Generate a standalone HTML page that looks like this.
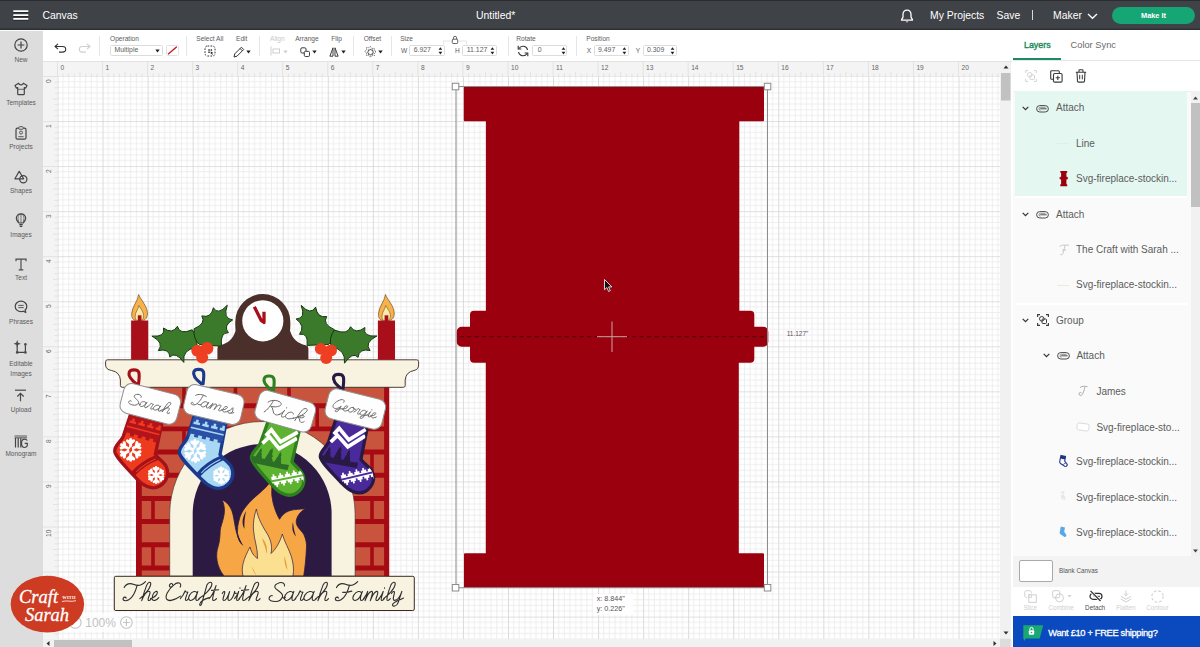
<!DOCTYPE html>
<html>
<head>
<meta charset="utf-8">
<style>
*{box-sizing:border-box;margin:0;padding:0}
html,body{width:1200px;height:647px;overflow:hidden;background:#fff;font-family:"Liberation Sans",sans-serif;}
.a{position:absolute;white-space:nowrap}
#hdr{position:absolute;left:0;top:0;width:1200px;height:30px;background:#3f4247;border-top:1px solid #2a2c30;z-index:5;box-shadow:inset 0 -1.5px 0 #2d2f33}
#hdr .t{position:absolute;color:#fff;font-size:10.4px;line-height:12px;top:8.5px;white-space:nowrap}
#side{position:absolute;left:0;top:29px;width:42.5px;height:618px;background:#dddddd}
#side .lb{position:absolute;left:0;width:42px;text-align:center;font-size:6.5px;line-height:8.6px;color:#5a5a5a}
#side svg{position:absolute;overflow:visible}
#tb{position:absolute;left:43px;top:29px;width:969px;height:33px;background:#fff;border-bottom:1px solid #e3e3e3}
#tb .l{position:absolute;font-size:6.6px;line-height:8px;color:#5c5c5c;white-space:nowrap;top:5.5px}
#tb .sep{position:absolute;top:7px;width:1px;height:20px;background:#e6e6e6}
#tb .box{position:absolute;height:10.5px;top:16.3px;border:1px solid #dcdcdc;border-radius:1.5px;font-size:6.9px;color:#5c5c5c;line-height:8.5px;padding-left:3.5px;background:#fff;white-space:nowrap}
#tb .sp{position:absolute;top:17.5px;width:4px;height:8px}
#tb svg{position:absolute;overflow:visible}
#rt{position:absolute;left:43px;top:62px;width:957px;height:15px;background:#f4f4f4}
#rl{position:absolute;left:43px;top:62px;width:15px;height:577px;background:#f4f4f4}
.rn{position:absolute;font-size:6.6px;line-height:8px;color:#666;top:1.5px}
.rv{position:absolute;font-size:6.6px;line-height:8px;color:#666;left:3px;transform-origin:0 0;transform:rotate(-90deg)}
#cv{position:absolute;left:0;top:0;width:1200px;height:647px;overflow:hidden;pointer-events:none}
#vs{position:absolute;left:1000px;top:62px;width:10.5px;height:577px;background:#f1f1f1}
#hs{position:absolute;left:43px;top:639px;width:969px;height:8px;background:#f1f1f1}
#rp{position:absolute;left:1012px;top:29px;width:188px;height:618px;background:#fafafa;border-left:1px solid #fff}
#rp .row{position:absolute;left:0;margin-top:.8px;font-size:10px;line-height:12px;color:#5c5c5c;white-space:nowrap}
#rp svg{position:absolute;overflow:visible}
</style>
</head>
<body>
<div id="hdr">
 <svg class="a" style="left:13px;top:9px" width="16" height="12" viewBox="0 0 16 12"><path d="M.3 2.300h15M.3 6.300h15M.3 10h15" stroke="#1e2023" stroke-width="1" fill="none"/><path d="M.3 1.150h15M.3 5.150h15M.3 8.850h15" stroke="#fff" stroke-width="1.700" fill="none"/></svg>
 <div class="t" style="left:42.5px">Canvas</div>
 <div class="t" style="left:476px">Untitled*</div>
 <svg class="a" style="left:900px;top:8px" width="14" height="15" viewBox="0 0 14 15"><path d="M7 1.2c-2.6 0-4 1.9-4 4.3v2.6L1.6 10.6v.6h10.8v-.6L11 8.100V5.500c0-2.400-1.400-4.300-4-4.300z" fill="none" stroke="#fff" stroke-width="1.3" stroke-linejoin="round"/><path d="M5.600 12.400a1.500 1.500 0 0 0 2.800 0z" fill="#fff"/></svg>
 <div class="t" style="left:930px">My Projects</div>
 <div class="t" style="left:996.5px">Save</div>
 <div class="a" style="left:1032px;top:9px;width:1px;height:10px;background:#d8d8d8"></div>
 <div class="t" style="left:1053px">Maker</div>
 <svg class="a" style="left:1087px;top:12px" width="11" height="7" viewBox="0 0 11 7"><path d="M1 1l4.500 4.300L10 1" stroke="#fff" stroke-width="1.300" fill="none"/></svg>
 <div class="a" style="left:1112px;top:5.700px;width:83px;height:17px;border-radius:9px;background:#16a574;color:#fff;font-size:7.400px;font-weight:bold;text-align:center;line-height:17px">Make It</div>
</div>
<div id="side">
 <div class="a hl-line" style="left:0;top:0;width:43px;height:2.300px;background:#fbfbfb"></div>
 <!-- coordinates inside #side are page y - 29 -->
 <svg style="left:13.500px;top:9.300px" width="14" height="14" viewBox="0 0 14 14"><circle cx="7" cy="7" r="6.200" fill="none" stroke="#444" stroke-width="1.200"/><path d="M7 3.600v6.800M3.600 7h6.800" stroke="#444" stroke-width="1.200" fill="none"/></svg>
 <div class="lb" style="top:26.700px">New</div>
 <svg style="left:13.500px;top:53px" width="14" height="14" viewBox="0 0 14 14"><path d="M4.600 1.200L1 3.400l1.300 2.700 1.400-.6v6.200c0 .6.400 1 1 1h4.600c.6 0 1-.4 1-1V5.500l1.400.6L13 3.400 9.400 1.200C9 2.300 8.100 2.900 7 2.900S5 2.300 4.600 1.200z" fill="none" stroke="#444" stroke-width="1.200" stroke-linejoin="round"/><path d="M3.700 7.300h6.600" stroke="#4a4a4a" stroke-width=".8"/></svg>
 <div class="lb" style="top:70px">Templates</div>
 <svg style="left:14.500px;top:96.500px" width="12" height="14" viewBox="0 0 12 14"><rect x="1" y="2.200" width="10" height="11" rx="1.500" fill="none" stroke="#444" stroke-width="1.200"/><rect x="3.800" y=".7" width="4.400" height="2.600" rx=".8" fill="#dcdcdc" stroke="#4a4a4a" stroke-width=".9"/><circle cx="6" cy="6.600" r="1.500" fill="none" stroke="#4a4a4a" stroke-width=".9"/><path d="M3.400 10.700h5.200" stroke="#4a4a4a" stroke-width=".9"/></svg>
 <div class="lb" style="top:114.300px">Projects</div>
 <svg style="left:13.500px;top:140.500px" width="14" height="14" viewBox="0 0 14 14"><path d="M5.200 1.300L9.600 8.800H.9z" fill="none" stroke="#444" stroke-width="1.200" stroke-linejoin="round"/><circle cx="9.300" cy="9.300" r="3.600" fill="none" stroke="#444" stroke-width="1.200"/></svg>
 <div class="lb" style="top:158px">Shapes</div>
 <svg style="left:14.500px;top:184px" width="12" height="15" viewBox="0 0 12 15"><path d="M6 .8C3.200.8 1.300 2.800 1.300 5.300c0 2 1.300 3.300 2.600 4.700h4.200c1.300-1.400 2.600-2.700 2.600-4.700C10.700 2.800 8.800.8 6 .8z" fill="none" stroke="#444" stroke-width="1.200"/><path d="M6 1v9M3.900 10l-.900-4.500C3 3 4.200 1.200 6 1c1.800.2 3 2 3 4.500L8.100 10" fill="none" stroke="#4a4a4a" stroke-width=".7"/><path d="M4.300 11.600h3.400M4.700 13.300h2.600" stroke="#444" stroke-width="1.200"/></svg>
 <div class="lb" style="top:202.300px">Images</div>
 <svg style="left:14.500px;top:229px" width="12" height="13" viewBox="0 0 12 13"><path d="M1 3.300V1.100h10v2.200M6 1.100v10.600M3.700 11.800h4.600" fill="none" stroke="#4a4a4a" stroke-width="1.150"/></svg>
 <div class="lb" style="top:244.700px">Text</div>
 <svg style="left:13.500px;top:271px" width="14" height="14" viewBox="0 0 14 14"><path d="M7 1.200c-3.300 0-5.800 2.300-5.800 5.200S3.700 11.600 7 11.600c.8 0 1.500-.1 2.200-.4l2.600 1.300-.7-2.500c1-.9 1.700-2.200 1.700-3.600 0-2.900-2.500-5.200-5.800-5.200z" fill="none" stroke="#444" stroke-width="1.200" stroke-linejoin="round"/><path d="M4.300 5.400h5.400M4.300 7.600h5.400" stroke="#4a4a4a" stroke-width=".9"/></svg>
 <div class="lb" style="top:289.200px">Phrases</div>
 <svg style="left:13px;top:311px" width="15" height="15" viewBox="0 0 15 15"><path d="M4.200 5.500v6.200M4.200 12.400h7.600M12.400 11.700V5.500" fill="none" stroke="#444" stroke-width="1.200"/><circle cx="4.200" cy="12.400" r="1.300" fill="#4a4a4a"/><circle cx="12.400" cy="12.400" r="1.300" fill="#4a4a4a"/><circle cx="12.400" cy="4.400" r="1.300" fill="#4a4a4a"/><path d="M4.200 0l1 2.700 2.700 1-2.700 1-1 2.700-1-2.700-2.700-1 2.700-1z" fill="#4a4a4a"/></svg>
 <div class="lb" style="top:331px">Editable</div>
 <div class="lb" style="top:340.600px">Images</div>
 <svg style="left:14px;top:360px" width="13" height="13" viewBox="0 0 13 13"><path d="M1 1.200h11" stroke="#4a4a4a" stroke-width="1.200"/><path d="M6.500 12.300V4.500M3.300 7.500l3.200-3.200 3.200 3.200" fill="none" stroke="#4a4a4a" stroke-width="1.200"/></svg>
 <div class="lb" style="top:377px">Upload</div>
 <svg style="left:13.500px;top:406px" width="15" height="14" viewBox="0 0 15 14"><path d="M.5 1h12.500M.5 2.800h12.500" stroke="#4a4a4a" stroke-width=".9"/><path d="M1.500 3v9.500M4.200 3v9.500M6.800 3v9.500" stroke="#444" stroke-width="1.200"/><path d="M13.300 5.500c-.8-1-1.700-1.400-2.800-1.400-1.800 0-3 1.600-3 4.200s1.200 4.200 3 4.200c1.200 0 2.200-.6 2.800-1.700V8.300h-2.600" fill="none" stroke="#444" stroke-width="1.200"/></svg>
 <div class="lb" style="top:421.100px">Monogram</div>
</div>
<div id="tb">
 <!-- coordinates inside #tb: x = page x - 43, y = page y - 29 -->
 <svg style="left:10.500px;top:14px" width="13" height="10" viewBox="0 0 13 10"><path d="M4 .8L1 3.500l3 2.700M1.200 3.500h7.300c1.800 0 3.200 1.200 3.200 2.800s-1.400 2.800-3.200 2.800H5" fill="none" stroke="#333" stroke-width="1.100"/></svg>
 <svg style="left:34.500px;top:14px" width="13" height="10" viewBox="0 0 13 10"><path d="M9 .8l3 2.700-3 2.700M11.800 3.500H4.500C2.700 3.500 1.300 4.700 1.300 6.300s1.400 2.800 3.200 2.800H8" fill="none" stroke="#cfcfcf" stroke-width="1.100"/></svg>
 <div class="sep" style="left:56px"></div>
 <div class="l" style="left:67px">Operation</div>
 <div class="box" style="left:67px;width:53px">Multiple</div>
 <svg style="left:111.500px;top:20.300px" width="5" height="4" viewBox="0 0 5 4"><path d="M.3.500h4.400L2.500 3.500z" fill="#222"/></svg>
 <div class="a" style="left:123px;top:16.300px;width:12.500px;height:10.500px;border:1px solid #e2e2e2;border-radius:1.500px"></div>
 <svg style="left:124px;top:17px" width="11" height="9" viewBox="0 0 11 9"><path d="M1 8.300L9.800.7" stroke="#c8121b" stroke-width="1.300"/></svg>
 <div class="sep" style="left:143px"></div>
 <div class="l" style="left:153.300px">Select All</div>
 <svg style="left:161px;top:16px" width="12" height="12" viewBox="0 0 12 12"><rect x="1" y="1" width="10" height="10" rx="2.500" fill="none" stroke="#333" stroke-width="1" stroke-dasharray="1.700 1.300"/><path d="M4.300 4.300h1.500v1.500H4.300zM6.600 4.300h1.500v1.500H6.600zM4.300 6.600h1.500v1.500H4.300zM6.600 6.600L9.300 7.700 8.100 8.200 9 9.300 8.400 9.800 7.500 8.700 6.900 9.600z" fill="#333"/></svg>
 <div class="l" style="left:193px">Edit</div>
 <svg style="left:189.500px;top:16.500px" width="12" height="12" viewBox="0 0 12 12"><path d="M8.400 1.200l2.300 2.300-6.700 6.700-3 .8.700-3.100zM7.100 2.500l2.300 2.300" fill="none" stroke="#333" stroke-width="1" stroke-linejoin="round"/></svg>
 <svg style="left:203px;top:21px" width="5" height="4" viewBox="0 0 5 4"><path d="M.3.500h4.400L2.500 3.500z" fill="#222"/></svg>
 <div class="sep" style="left:216px"></div>
 <div class="l" style="left:227px;color:#c8c8c8">Align</div>
 <svg style="left:227px;top:17px" width="11" height="10" viewBox="0 0 11 10"><path d="M1 .5v9" stroke="#cfcfcf" stroke-width="1"/><rect x="3" y="3" width="6.500" height="4" fill="none" stroke="#cfcfcf" stroke-width="1"/></svg>
 <svg style="left:240px;top:21px" width="5" height="4" viewBox="0 0 5 4"><path d="M.3.500h4.400L2.500 3.500z" fill="#cfcfcf"/></svg>
 <div class="l" style="left:252.200px">Arrange</div>
 <svg style="left:256.500px;top:17.500px" width="11" height="11" viewBox="0 0 11 11"><rect x=".8" y=".8" width="5.200" height="5.200" rx="1.200" fill="none" stroke="#333" stroke-width=".95"/><rect x="4.300" y="4.300" width="5.200" height="5.200" rx="1.200" fill="#fff" stroke="#333" stroke-width=".95"/></svg>
 <svg style="left:268.500px;top:21px" width="5" height="4" viewBox="0 0 5 4"><path d="M.3.500h4.400L2.500 3.500z" fill="#222"/></svg>
 <div class="l" style="left:288.200px">Flip</div>
 <svg style="left:286.300px;top:17.500px" width="10" height="10" viewBox="0 0 10 10"><path d="M4 .8v8.400H.9zM6 .8v8.400H9.100z" fill="none" stroke="#333" stroke-width=".95" stroke-linejoin="round"/></svg>
 <svg style="left:297.700px;top:21px" width="5" height="4" viewBox="0 0 5 4"><path d="M.3.500h4.400L2.500 3.500z" fill="#222"/></svg>
 <div class="sep" style="left:309.700px"></div>
 <div class="l" style="left:320.700px">Offset</div>
 <svg style="left:320.500px;top:15.500px" width="13" height="13" viewBox="0 0 13 13"><path d="M6.500 1l1.700 2.300 2.800-.3-.3 2.800L13 6.500l-2.300 1.700.3 2.800-2.800-.3L6.500 13l-1.700-2.300-2.800.3.300-2.800L0 6.500l2.300-1.700L2 2l2.800.3z" fill="none" stroke="#333" stroke-width=".8" stroke-dasharray="1.300 1" transform="translate(.6 .6) scale(.9)"/><path d="M6.500 3.700l.9 1.300 1.600-.2-.2 1.600 1.300.9-1.300.9.200 1.600-1.600-.2-.9 1.300-.9-1.300-1.600.2.200-1.600-1.300-.9 1.300-.9-.2-1.600 1.600.2z" fill="none" stroke="#333" stroke-width=".9" transform="translate(.8 .7) scale(.88)"/></svg>
 <svg style="left:334.500px;top:21px" width="5" height="4" viewBox="0 0 5 4"><path d="M.3.500h4.400L2.500 3.500z" fill="#222"/></svg>
 <div class="sep" style="left:347.800px"></div>
 <div class="l" style="left:357.200px">Size</div>
 <div class="l" style="left:358px;top:17.800px">W</div>
 <div class="box" style="left:366.200px;width:35.600px">6.927</div>
 <div class="l" style="left:412px;top:17.800px">H</div>
 <div class="box" style="left:419.300px;width:34.400px">11.127</div>
 <svg style="left:400px;top:6px" width="24" height="10" viewBox="0 0 24 10"><path d="M.5 9.500v-3.500h8M23.500 9.500v-3.500h-8" fill="none" stroke="#ddd" stroke-width=".8"/><rect x="9.300" y="4.200" width="5.400" height="4.300" rx=".8" fill="#fff" stroke="#555" stroke-width=".9"/><path d="M10.400 4.200V2.900a1.600 1.600 0 0 1 3.200 0v1.300" fill="none" stroke="#555" stroke-width=".9"/></svg>
 <div class="sep" style="left:464.500px"></div>
 <div class="l" style="left:473.300px">Rotate</div>
 <svg style="left:473.500px;top:15.500px" width="12" height="12" viewBox="0 0 12 12"><path d="M10.500 5A4.600 4.600 0 0 0 2 3.500M1.500 7A4.600 4.600 0 0 0 10 8.500" fill="none" stroke="#333" stroke-width="1.100"/><path d="M1.200.8v3.200h3.200M10.800 11.200V8H7.600" fill="none" stroke="#333" stroke-width="1.100"/></svg>
 <div class="box" style="left:489.300px;width:35px;padding-left:4.500px">0</div>
 <div class="sep" style="left:533px"></div>
 <div class="l" style="left:543.300px">Position</div>
 <div class="l" style="left:543.800px;top:17.800px">X</div>
 <div class="box" style="left:550.500px;width:35px">9.497</div>
 <div class="l" style="left:592.800px;top:17.800px">Y</div>
 <div class="box" style="left:599.500px;width:34.200px">0.309</div>
 <svg style="left:0;top:0" width="700" height="33" viewBox="0 0 700 33"><g fill="#222"><path id="spn" d="M0 3.200L1.900.6 3.800 3.200zM0 5.200L1.900 7.800 3.800 5.200z" transform="translate(395.500 17.600)"/><path d="M0 3.200L1.900.6 3.800 3.200zM0 5.200L1.900 7.800 3.800 5.200z" transform="translate(447.500 17.600)"/><path d="M0 3.200L1.900.6 3.800 3.200zM0 5.200L1.900 7.800 3.800 5.200z" transform="translate(518.600 17.600)"/><path d="M0 3.200L1.900.6 3.800 3.200zM0 5.200L1.900 7.800 3.800 5.200z" transform="translate(579.500 17.600)"/><path d="M0 3.200L1.900.6 3.800 3.200zM0 5.200L1.900 7.800 3.800 5.200z" transform="translate(627.600 17.600)"/></g></svg>
</div>
<div id="rt"></div><div id="rl"></div>
<div id="vs"></div><div id="hs"></div>
<svg class="a" style="left:0;top:0" width="1200" height="647" viewBox="0 0 1200 647">
<defs><clipPath id="cc"><rect x="57.5" y="76.500" width="942.5" height="562.500"/></clipPath>
<pattern id="gp" x="57.5" y="76" width="45.05" height="45.05" patternUnits="userSpaceOnUse"><path d="M5.63 0V45.05M0 5.63H45.05M11.26 0V45.05M0 11.26H45.05M16.89 0V45.05M0 16.89H45.05M22.52 0V45.05M0 22.52H45.05M28.16 0V45.05M0 28.16H45.05M33.79 0V45.05M0 33.79H45.05M39.42 0V45.05M0 39.42H45.05" stroke="#e9e9e9" stroke-width=".75" fill="none"/><path d="M0 0V45.05M0 0H45.05" stroke="#d6d6d6" stroke-width="1.700" fill="none"/></pattern>
</defs>
<rect x="57.5" y="76.500" width="942.5" height="562.500" fill="url(#gp)"/>
<path d="M57.50 62V77M63.13 73.5V77M68.76 73.5V77M74.39 73.5V77M80.03 72V77M85.66 73.5V77M91.29 73.5V77M96.92 73.5V77M102.55 62V77M108.18 73.5V77M113.81 73.5V77M119.44 73.5V77M125.07 72V77M130.71 73.5V77M136.34 73.5V77M141.97 73.5V77M147.60 62V77M153.23 73.5V77M158.86 73.5V77M164.49 73.5V77M170.12 72V77M175.76 73.5V77M181.39 73.5V77M187.02 73.5V77M192.65 62V77M198.28 73.5V77M203.91 73.5V77M209.54 73.5V77M215.17 72V77M220.81 73.5V77M226.44 73.5V77M232.07 73.5V77M237.70 62V77M243.33 73.5V77M248.96 73.5V77M254.59 73.5V77M260.22 72V77M265.86 73.5V77M271.49 73.5V77M277.12 73.5V77M282.75 62V77M288.38 73.5V77M294.01 73.5V77M299.64 73.5V77M305.27 72V77M310.91 73.5V77M316.54 73.5V77M322.17 73.5V77M327.80 62V77M333.43 73.5V77M339.06 73.5V77M344.69 73.5V77M350.32 72V77M355.96 73.5V77M361.59 73.5V77M367.22 73.5V77M372.85 62V77M378.48 73.5V77M384.11 73.5V77M389.74 73.5V77M395.37 72V77M401.01 73.5V77M406.64 73.5V77M412.27 73.5V77M417.90 62V77M423.53 73.5V77M429.16 73.5V77M434.79 73.5V77M440.42 72V77M446.06 73.5V77M451.69 73.5V77M457.32 73.5V77M462.95 62V77M468.58 73.5V77M474.21 73.5V77M479.84 73.5V77M485.47 72V77M491.11 73.5V77M496.74 73.5V77M502.37 73.5V77M508.00 62V77M513.63 73.5V77M519.26 73.5V77M524.89 73.5V77M530.52 72V77M536.16 73.5V77M541.79 73.5V77M547.42 73.5V77M553.05 62V77M558.68 73.5V77M564.31 73.5V77M569.94 73.5V77M575.57 72V77M581.21 73.5V77M586.84 73.5V77M592.47 73.5V77M598.10 62V77M603.73 73.5V77M609.36 73.5V77M614.99 73.5V77M620.62 72V77M626.26 73.5V77M631.89 73.5V77M637.52 73.5V77M643.15 62V77M648.78 73.5V77M654.41 73.5V77M660.04 73.5V77M665.67 72V77M671.31 73.5V77M676.94 73.5V77M682.57 73.5V77M688.20 62V77M693.83 73.5V77M699.46 73.5V77M705.09 73.5V77M710.72 72V77M716.36 73.5V77M721.99 73.5V77M727.62 73.5V77M733.25 62V77M738.88 73.5V77M744.51 73.5V77M750.14 73.5V77M755.77 72V77M761.41 73.5V77M767.04 73.5V77M772.67 73.5V77M778.30 62V77M783.93 73.5V77M789.56 73.5V77M795.19 73.5V77M800.82 72V77M806.46 73.5V77M812.09 73.5V77M817.72 73.5V77M823.35 62V77M828.98 73.5V77M834.61 73.5V77M840.24 73.5V77M845.87 72V77M851.51 73.5V77M857.14 73.5V77M862.77 73.5V77M868.40 62V77M874.03 73.5V77M879.66 73.5V77M885.29 73.5V77M890.92 72V77M896.56 73.5V77M902.19 73.5V77M907.82 73.5V77M913.45 62V77M919.08 73.5V77M924.71 73.5V77M930.34 73.5V77M935.97 72V77M941.61 73.5V77M947.24 73.5V77M952.87 73.5V77M958.50 62V77M964.13 73.5V77M969.76 73.5V77M975.39 73.5V77M981.02 72V77M986.66 73.5V77M992.29 73.5V77M997.92 73.5V77" stroke="#e2e2e2" stroke-width="1" fill="none"/>
<path d="M43 76.50H58M54.5 82.13H58M54.5 87.76H58M54.5 93.39H58M53 99.03H58M54.5 104.66H58M54.5 110.29H58M54.5 115.92H58M43 121.55H58M54.5 127.18H58M54.5 132.81H58M54.5 138.44H58M53 144.07H58M54.5 149.71H58M54.5 155.34H58M54.5 160.97H58M43 166.60H58M54.5 172.23H58M54.5 177.86H58M54.5 183.49H58M53 189.12H58M54.5 194.76H58M54.5 200.39H58M54.5 206.02H58M43 211.65H58M54.5 217.28H58M54.5 222.91H58M54.5 228.54H58M53 234.17H58M54.5 239.81H58M54.5 245.44H58M54.5 251.07H58M43 256.70H58M54.5 262.33H58M54.5 267.96H58M54.5 273.59H58M53 279.22H58M54.5 284.86H58M54.5 290.49H58M54.5 296.12H58M43 301.75H58M54.5 307.38H58M54.5 313.01H58M54.5 318.64H58M53 324.27H58M54.5 329.91H58M54.5 335.54H58M54.5 341.17H58M43 346.80H58M54.5 352.43H58M54.5 358.06H58M54.5 363.69H58M53 369.32H58M54.5 374.96H58M54.5 380.59H58M54.5 386.22H58M43 391.85H58M54.5 397.48H58M54.5 403.11H58M54.5 408.74H58M53 414.37H58M54.5 420.01H58M54.5 425.64H58M54.5 431.27H58M43 436.90H58M54.5 442.53H58M54.5 448.16H58M54.5 453.79H58M53 459.42H58M54.5 465.06H58M54.5 470.69H58M54.5 476.32H58M43 481.95H58M54.5 487.58H58M54.5 493.21H58M54.5 498.84H58M53 504.47H58M54.5 510.11H58M54.5 515.74H58M54.5 521.37H58M43 527.00H58M54.5 532.63H58M54.5 538.26H58M54.5 543.89H58M53 549.52H58M54.5 555.16H58M54.5 560.79H58M54.5 566.42H58M43 572.05H58M54.5 577.68H58M54.5 583.31H58M54.5 588.94H58M53 594.57H58M54.5 600.21H58M54.5 605.84H58M54.5 611.47H58M43 617.10H58M54.5 622.73H58M54.5 628.36H58M54.5 633.99H58" stroke="#e2e2e2" stroke-width="1" fill="none"/>
</svg>
<div class="rn" style="left:60.5px;top:63.500px">0</div>
<div class="rn" style="left:105.5px;top:63.500px">1</div>
<div class="rn" style="left:150.6px;top:63.500px">2</div>
<div class="rn" style="left:195.6px;top:63.500px">3</div>
<div class="rn" style="left:240.7px;top:63.500px">4</div>
<div class="rn" style="left:285.8px;top:63.500px">5</div>
<div class="rn" style="left:330.8px;top:63.500px">6</div>
<div class="rn" style="left:375.8px;top:63.500px">7</div>
<div class="rn" style="left:420.9px;top:63.500px">8</div>
<div class="rn" style="left:465.9px;top:63.500px">9</div>
<div class="rn" style="left:511.0px;top:63.500px">10</div>
<div class="rn" style="left:556.0px;top:63.500px">11</div>
<div class="rn" style="left:601.1px;top:63.500px">12</div>
<div class="rn" style="left:646.1px;top:63.500px">13</div>
<div class="rn" style="left:691.2px;top:63.500px">14</div>
<div class="rn" style="left:736.2px;top:63.500px">15</div>
<div class="rn" style="left:781.3px;top:63.500px">16</div>
<div class="rn" style="left:826.3px;top:63.500px">17</div>
<div class="rn" style="left:871.4px;top:63.500px">18</div>
<div class="rn" style="left:916.4px;top:63.500px">19</div>
<div class="rn" style="left:961.5px;top:63.500px">20</div>
<div class="rv" style="top:82.7px;left:45px">0</div>
<div class="rv" style="top:127.8px;left:45px">1</div>
<div class="rv" style="top:172.8px;left:45px">2</div>
<div class="rv" style="top:217.8px;left:45px">3</div>
<div class="rv" style="top:262.9px;left:45px">4</div>
<div class="rv" style="top:307.9px;left:45px">5</div>
<div class="rv" style="top:353.0px;left:45px">6</div>
<div class="rv" style="top:398.0px;left:45px">7</div>
<div class="rv" style="top:443.1px;left:45px">8</div>
<div class="rv" style="top:488.1px;left:45px">9</div>
<div class="rv" style="top:536.7px;left:45px">10</div>
<div class="rv" style="top:581.7px;left:45px">11</div>
<div class="rv" style="top:626.8px;left:45px">12</div>
<svg class="a" style="left:0;top:0" width="1200" height="647" viewBox="0 0 1200 647">
 <path d="M1003.500 68.500h5l-2.500-3z" fill="#2e2e2e"/>
 <rect x="1001" y="73" width="9.500" height="27.500" fill="#c1c1c1"/>
 <path d="M1003.500 631.500h5l-2.500 3z" fill="#2e2e2e"/>
 <path d="M49.500 641v5l-3-2.500z" fill="#2e2e2e"/>
 <rect x="54" y="640" width="78" height="7" fill="#c1c1c1"/>
 <path d="M993.500 641v5l3-2.500z" fill="#2e2e2e"/>
 <rect id="corner" x="1000" y="638.800" width="10.500" height="8.200" fill="#dcdcdc"/>
</svg>
<div id="rp">
<div class="a" style="left:0;top:0;width:187px;height:31.500px;background:#fff;border-bottom:1px solid #e6e6e6"></div>
<div class="a" style="left:11px;top:9.5px;font-size:8.900px;line-height:12px;-webkit-text-stroke:.4px #1c8a62;color:#1c8a62">Layers</div>
<div class="a" style="left:57.5px;top:9.5px;font-size:9.300px;line-height:12px;color:#6a6a6a">Color Sync</div>
<div class="a" style="left:0;top:29.299999999999997px;width:48px;height:2.200px;background:#1c8a62"></div>
<div class="a" style="left:0;top:32px;width:187px;height:29.500px;background:#fff"></div>
<svg style="left:11.5px;top:40.5px" width="12" height="12" viewBox="0 0 12 12"><path d="M.6 3V.6H3M9 .6h2.400V3M11.400 9v2.400H9M3 11.400H.6V9" fill="none" stroke="#d5d5d5" stroke-width="1"/><circle cx="4.800" cy="4.800" r="2.300" fill="none" stroke="#d5d5d5" stroke-width="1"/><rect x="5" y="5" width="4.500" height="4.500" rx="1" fill="none" stroke="#d5d5d5" stroke-width="1"/></svg>
<svg style="left:36.799999999999955px;top:40.5px" width="13" height="13" viewBox="0 0 13 13"><path d="M3.300 9.300H1.700C1.100 9.300.7 8.900.7 8.300V1.700C.7 1.100 1.100.7 1.700.7h6.600c.6 0 1 .4 1 1v1.600" fill="none" stroke="#3a3a3a" stroke-width="1.100"/><rect x="3.500" y="3.500" width="8.600" height="8.600" rx="1.200" fill="none" stroke="#3a3a3a" stroke-width="1.100"/><path d="M7.800 5.700v4.200M5.700 7.800h4.200" stroke="#3a3a3a" stroke-width="1.100"/></svg>
<svg style="left:62px;top:40px" width="12" height="14" viewBox="0 0 12 14"><path d="M.8 3.200h10.400M4 3V1.500C4 1 4.300.7 4.800.7h2.400c.5 0 .8.300.8.800V3M2 3.300l.5 8.800c0 .6.500 1 1.100 1h4.800c.6 0 1.100-.4 1.100-1L10 3.300" fill="none" stroke="#3a3a3a" stroke-width="1.100"/><path d="M4.700 5.800v4.500M7.300 5.800v4.500" stroke="#3a3a3a" stroke-width="1"/></svg>
<div class="a" style="left:0;top:61.5px;width:187px;height:465.0px;background:#fafafa;border-top:1px solid #ececec"></div>
<div class="a" style="left:2.3999999999999773px;top:62.3px;width:172.10000000000002px;height:104.7px;background:#e5f7f1"></div>
<div class="a" style="left:2.3999999999999773px;top:167px;width:172.10000000000002px;height:2px;background:#fff"></div>
<div class="a" style="left:2.3999999999999773px;top:273.5px;width:172.10000000000002px;height:2px;background:#fff"></div>
<svg style="left:9.099999999999909px;top:76.5px" width="7" height="5" viewBox="0 0 7 5"><path d="M.7.800l2.800 2.900L6.300.8" fill="none" stroke="#333" stroke-width="1.200"/></svg>
<svg style="left:23.40000000000009px;top:75.5px" width="13" height="8" viewBox="0 0 13 8"><rect x=".6" y=".6" width="11.800" height="6.400" rx="3.200" fill="none" stroke="#4a4a4a" stroke-width="1"/><path d="M10.300 3.800H4.600" fill="none" stroke="#4a4a4a" stroke-width="1" stroke-linecap="round"/><path d="M9.500 2.300H4.500a1.500 1.500 0 0 0 0 3" fill="none" stroke="#4a4a4a" stroke-width=".6"/></svg>
<div class="row" style="left:43px;top:72.7px">Attach</div>
<div class="a" style="left:44px;top:114.4px;width:12px;height:1px;background:#dcefe9"></div>
<div class="row" style="left:63px;top:108.10000000000001px">Line</div>
<svg style="left:45.700000000000045px;top:142.4px" width="9.500" height="15.200" viewBox="0 0 9.500 15.200"><path d="M1.300 0h6.900v1.800h-.8v4h.9v.8h.8v1.200h-.8v.8h-.9v4.600h.8v2H1.300v-2h.8V8.600h-.9v-.8H.4V6.600h.8v-.8h.9v-4h-.8z" fill="#9b000e"/></svg>
<div class="row" style="left:63px;top:143.5px">Svg-fireplace-stockin...</div>
<svg style="left:9.099999999999909px;top:182.7px" width="7" height="5" viewBox="0 0 7 5"><path d="M.7.800l2.800 2.900L6.300.8" fill="none" stroke="#333" stroke-width="1.200"/></svg>
<svg style="left:23.40000000000009px;top:181.7px" width="13" height="8" viewBox="0 0 13 8"><rect x=".6" y=".6" width="11.800" height="6.400" rx="3.200" fill="none" stroke="#4a4a4a" stroke-width="1"/><path d="M10.300 3.800H4.600" fill="none" stroke="#4a4a4a" stroke-width="1" stroke-linecap="round"/><path d="M9.500 2.300H4.500a1.500 1.500 0 0 0 0 3" fill="none" stroke="#4a4a4a" stroke-width=".6"/></svg>
<div class="row" style="left:43px;top:178.89999999999998px">Attach</div>
<svg style="left:44.5px;top:214.6px" width="12" height="12" viewBox="0 0 12 12"><path d="M1.500 3c1-2 3-1.800 4.500-1.800h5M7 1.300c-.5 3-1.200 6-2.200 8.500-.6 1.300-2 1.300-2.500.3M4 6h4" fill="none" stroke="#bdbdbd" stroke-width=".8"/></svg>
<div class="row" style="left:63px;top:214.29999999999998px">The Craft with Sarah ...</div>
<div class="a" style="left:44px;top:256.0px;width:12px;height:1.200px;background:#f1ead2"></div>
<div class="row" style="left:63px;top:249.7px">Svg-fireplace-stockin...</div>
<svg style="left:9.099999999999909px;top:288.9px" width="7" height="5" viewBox="0 0 7 5"><path d="M.7.800l2.800 2.900L6.300.8" fill="none" stroke="#333" stroke-width="1.200"/></svg>
<svg style="left:23.90000000000009px;top:285.4px" width="12" height="12" viewBox="0 0 12 12"><path d="M.6 3V.6H3M9 .6h2.400V3M11.400 9v2.400H9M3 11.400H.6V9" fill="none" stroke="#3a3a3a" stroke-width="1.100"/><circle cx="4.800" cy="4.800" r="2.300" fill="none" stroke="#3a3a3a" stroke-width="1"/><rect x="5" y="5" width="4.500" height="4.500" rx="1" fill="none" stroke="#3a3a3a" stroke-width="1"/></svg>
<div class="row" style="left:43px;top:285.09999999999997px">Group</div>
<svg style="left:29.5px;top:324.29999999999995px" width="7" height="5" viewBox="0 0 7 5"><path d="M.7.800l2.800 2.900L6.300.8" fill="none" stroke="#333" stroke-width="1.200"/></svg>
<svg style="left:43.799999999999955px;top:323.29999999999995px" width="13" height="8" viewBox="0 0 13 8"><rect x=".6" y=".6" width="11.800" height="6.400" rx="3.200" fill="none" stroke="#4a4a4a" stroke-width="1"/><path d="M10.300 3.800H4.600" fill="none" stroke="#4a4a4a" stroke-width="1" stroke-linecap="round"/><path d="M9.500 2.300H4.500a1.500 1.500 0 0 0 0 3" fill="none" stroke="#4a4a4a" stroke-width=".6"/></svg>
<div class="row" style="left:63.40000000000009px;top:320.49999999999994px">Attach</div>
<svg style="left:64px;top:356.2px" width="12" height="12" viewBox="0 0 12 12"><path d="M3 2.500c2-1.500 5-1.500 7.500-.8M8 1.500C7.500 4 6.500 8 5 9.800c-1 1.200-2.800.8-3-.8-.1-1.500 1.500-2 2.500-1.200" fill="none" stroke="#9a9a9a" stroke-width=".8"/></svg>
<div class="row" style="left:83.40000000000009px;top:355.9px">James</div>
<svg style="left:63px;top:393.09999999999997px" width="14" height="10" viewBox="0 0 14 10"><rect x="1" y="1.500" width="12" height="7" rx="2" fill="#fff" stroke="#d8d8d8" stroke-width=".9" transform="rotate(8 7 5)"/></svg>
<div class="row" style="left:83.40000000000009px;top:392.5px">Svg-fireplace-sto...</div>
<svg style="left:45px;top:425.0px" width="11" height="16" viewBox="0 0 11 16"><path d="M3 1.500l4.500 1-.8 4.500 2.300 3c.8 1.200-.8 3-2.200 2.200L2.500 9.500c-.8-.6-1-1.600-.7-2.600z" fill="none" stroke="#1c3486" stroke-width="1.100"/><path d="M3 1.500l4.500 1-.5 3-4.600-1z" fill="#1c3486"/><circle cx="7.300" cy="10.800" r="1.600" fill="#fff" stroke="#1c3486" stroke-width=".7"/></svg>
<div class="row" style="left:63px;top:426.7px">Svg-fireplace-stockin...</div>
<svg style="left:45px;top:460.4px" width="11" height="16" viewBox="0 0 11 16"><path d="M3.500 2l3 .800-.600 3.500 1.800 2.500-1.500 2.800-3.200-2.300.3-3.300z" fill="#e6e6e6"/><path d="M4 4l1.500 1-1.500 1.500zM5 9l1.300.5-.8 1z" fill="#fff"/></svg>
<div class="row" style="left:63px;top:462.09999999999997px">Svg-fireplace-stockin...</div>
<svg style="left:45px;top:495.79999999999995px" width="11" height="16" viewBox="0 0 11 16"><path d="M2.800 1.500l4.200 1-.8 4.300 2 3c.8 1.200-.8 2.800-2 2L2.500 9.300c-.8-.6-1-1.500-.7-2.500z" fill="#58a8e6"/></svg>
<div class="row" style="left:63px;top:497.49999999999994px">Svg-fireplace-stockin...</div>
<div class="a" style="left:177.5px;top:62px;width:9.500px;height:464.5px;background:#f1f1f1"></div>
<div class="a" style="left:178px;top:73.5px;width:9px;height:104.7px;background:#c1c1c1"></div>
<svg style="left:180px;top:66.5px" width="5" height="4" viewBox="0 0 5 4"><path d="M0 3.500h5L2.500.5z" fill="#444"/></svg>
<svg style="left:180px;top:519.5px" width="5" height="4" viewBox="0 0 5 4"><path d="M0 .5h5L2.500 3.500z" fill="#444"/></svg>
<div class="a" style="left:0;top:526.7px;width:187px;height:31.5px;background:#f3f3f3"></div>
<div class="a" style="left:6.399999999999977px;top:530.5px;width:33.300px;height:22.200px;background:#fff;border:1px solid #a9a9a9;border-radius:2px"></div>
<div class="a" style="left:46px;top:537.6px;font-size:6.300px;line-height:8px;color:#555">Blank Canvas</div>
<div class="a" style="left:0;top:558.2px;width:187px;height:29.199999999999932px;background:#fff"></div>
<svg style="left:11px;top:561px" width="13" height="13" viewBox="0 0 13 13"><path d="M7.500 3.300V2.600C7.500 1.500 6.600.7 5.500.7h-2.900C1.500.7.700 1.500.700 2.600v2.900c0 1.100.8 2 1.900 2h.7" fill="none" stroke="#d0d0d0" stroke-width="1"/><rect x="4.800" y="4.800" width="7.500" height="7.500" fill="none" stroke="#d0d0d0" stroke-width="1"/><rect x="4.800" y="4.800" width="2.700" height="2.700" fill="none" stroke="#d0d0d0" stroke-width=".8"/></svg>
<svg style="left:39px;top:561px" width="20" height="13" viewBox="0 0 20 13"><rect x=".7" y=".7" width="7" height="7" rx="1" fill="none" stroke="#d0d0d0" stroke-width="1"/><circle cx="7.500" cy="7.800" r="4" fill="none" stroke="#d0d0d0" stroke-width="1"/><path d="M15.500 5h4l-2 2.500z" fill="#d0d0d0"/></svg>
<svg style="left:75.5px;top:561px" width="14" height="12" viewBox="0 0 14 12"><rect x="1" y="3.300" width="12" height="6" rx="3" fill="none" stroke="#2e2e2e" stroke-width="1.200"/><path d="M11 6.300H5.500a1.100 1.100 0 0 1 0-2.200" fill="none" stroke="#2e2e2e" stroke-width="1" /><path d="M1.500.800L11.500 11" stroke="#fff" stroke-width="2.600"/><path d="M1.500.800L11.500 11" stroke="#2e2e2e" stroke-width="1.200"/></svg>
<svg style="left:107px;top:560.5px" width="12" height="13" viewBox="0 0 12 13"><path d="M6 .5v5M3.800 3.500L6 5.700l2.200-2.200M.8 6.300L6 9.300l5.200-3M.8 9L6 12l5.200-3" fill="none" stroke="#d0d0d0" stroke-width="1"/></svg>
<svg style="left:138px;top:560.7px" width="13" height="13" viewBox="0 0 13 13"><circle cx="6.500" cy="6.500" r="5.700" fill="none" stroke="#d0d0d0" stroke-width="1.100" stroke-dasharray="2.600 1.900"/></svg>
<div class="a" style="left:-7.8px;width:50px;text-align:center;top:575.2px;font-size:6.300px;line-height:8px;color:#d0d0d0;font-weight:normal">Slice</div>
<div class="a" style="left:23.1px;width:50px;text-align:center;top:575.2px;font-size:6.300px;line-height:8px;color:#d0d0d0;font-weight:normal">Combine</div>
<div class="a" style="left:57.1px;width:50px;text-align:center;top:575.2px;font-size:6.300px;line-height:8px;color:#4a4a4a;font-weight:normal">Detach</div>
<div class="a" style="left:87.8px;width:50px;text-align:center;top:575.2px;font-size:6.300px;line-height:8px;color:#d0d0d0;font-weight:normal">Flatten</div>
<div class="a" style="left:119.4px;width:50px;text-align:center;top:575.2px;font-size:6.300px;line-height:8px;color:#d0d0d0;font-weight:normal">Contour</div>
<div class="a" style="left:0;top:587.4px;width:187px;height:31px;background:#0a49be"></div>
<svg style="left:10px;top:596px" width="21" height="17" viewBox="0 0 21 17"><path d="M.3.300h19.900l-3.500 13.200H2.500L1.500 16 .3 13.500z" fill="#19a873"/><rect x="5.800" y="5.200" width="5.400" height="4.600" rx="1" fill="#fff"/><path d="M6.900 5.400V4a1.600 1.600 0 0 1 3.200 0v1.400" fill="none" stroke="#fff" stroke-width="1"/><circle cx="8.500" cy="7.500" r=".8" fill="#19a873"/></svg>
<div class="a" style="left:35.299999999999955px;top:598px;font-size:9.300px;letter-spacing:-.32px;line-height:12px;color:#fff;-webkit-text-stroke:.3px #fff">Want £10 + FREE shipping?</div>
</div>
<svg class="a" style="left:0;top:0" width="1200" height="647" viewBox="0 0 1200 647">
 <!-- red shape -->
 <path d="M464.800 86.500H763a1 1 0 0 1 1 1V120.200a1 1 0 0 1-1 1H739.300V310.700H750.300a4 4 0 0 1 4 4V326.700H763.300a5 5 0 0 1 5 5V341.700a5 5 0 0 1-5 5H754.300V358.700a4 4 0 0 1-4 4H738.800V553.300H763a1 1 0 0 1 1 1V587.700H464V554.300a1 1 0 0 1 1-1H485.800V362.700H474a4 4 0 0 1-4-4V346.700H461.700a5 5 0 0 1-5-5V331.700a5 5 0 0 1 5-5H470V314.700a4 4 0 0 1 4-4H485.900V121.200H464.800a1 1 0 0 1-1-1V87.500a1 1 0 0 1 1-1z" fill="#9b000e"/>
 <path d="M459.500 336.700H765" stroke="#5c0009" stroke-width="1.200" stroke-dasharray="4.300 3.200" fill="none"/>
 <path d="M597 336.700h30M612 321.500v30.500" stroke="#c9a7a3" stroke-width="1" fill="none"/>
 <!-- selection box -->
 <rect x="456" y="86.500" width="311.500" height="501.200" fill="none" stroke="#8c8c8c" stroke-width="1"/>
 <g fill="#fff" stroke="#8c8c8c" stroke-width="1"><rect x="452.300" y="83.300" width="6.500" height="6.500"/><rect x="764.300" y="83.300" width="6.500" height="6.500"/><rect x="452.300" y="584.500" width="6.500" height="6.500"/><rect x="764.300" y="584.500" width="6.500" height="6.500"/></g>
 <!-- cursor -->
 <path d="M604.500 279.500v10.200l2.400-2.200 1.700 4 1.700-.8-1.700-3.800h3.300z" fill="#111" stroke="#fff" stroke-width=".8"/>
</svg>
<div class="a" style="left:786.700px;top:330px;font-size:6.500px;line-height:8px;color:#555">11.127"</div>
<div class="a" style="left:593px;top:594px;width:40px;height:20.500px;background:rgba(255,255,255,.85)"></div>
<div class="a" style="left:596.700px;top:595.300px;font-size:7.200px;line-height:8px;color:#555">x: 8.844"</div>
<div class="a" style="left:596.700px;top:605px;font-size:7.200px;line-height:8px;color:#555">y: 0.226"</div>
<svg class="a" style="left:0;top:0" width="1200" height="647" viewBox="0 0 1200 647">
<rect x="136" y="384" width="253.200" height="192" fill="#a60b14"/>
<path d="M141.8 385.0H182.2V403.2H141.8zM185.8 385.0H233.7V403.2H185.8zM237.3 385.0H287.2V403.2H237.3zM290.8 385.0H340.2V403.2H290.8zM343.8 385.0H384.1V403.2H343.8zM141.8 408.2H151.2V426.4H141.8zM154.8 408.2H205.9V426.4H154.8zM209.5 408.2H260.7V426.4H209.5zM264.3 408.2H315.4V426.4H264.3zM319.0 408.2H370.2V426.4H319.0zM373.8 408.2H384.1V426.4H373.8zM141.8 431.3H182.2V449.5H141.8zM185.8 431.3H233.7V449.5H185.8zM237.3 431.3H287.2V449.5H237.3zM290.8 431.3H340.2V449.5H290.8zM343.8 431.3H384.1V449.5H343.8zM141.8 454.5H151.2V472.7H141.8zM154.8 454.5H205.9V472.7H154.8zM209.5 454.5H260.7V472.7H209.5zM264.3 454.5H315.4V472.7H264.3zM319.0 454.5H370.2V472.7H319.0zM373.8 454.5H384.1V472.7H373.8zM141.8 477.7H182.2V495.9H141.8zM185.8 477.7H233.7V495.9H185.8zM237.3 477.7H287.2V495.9H237.3zM290.8 477.7H340.2V495.9H290.8zM343.8 477.7H384.1V495.9H343.8zM141.8 500.9H151.2V519.1H141.8zM154.8 500.9H205.9V519.1H154.8zM209.5 500.9H260.7V519.1H209.5zM264.3 500.9H315.4V519.1H264.3zM319.0 500.9H370.2V519.1H319.0zM373.8 500.9H384.1V519.1H373.8zM141.8 524.0H182.2V542.2H141.8zM185.8 524.0H233.7V542.2H185.8zM237.3 524.0H287.2V542.2H237.3zM290.8 524.0H340.2V542.2H290.8zM343.8 524.0H384.1V542.2H343.8zM141.8 547.2H151.2V565.4H141.8zM154.8 547.2H205.9V565.4H154.8zM209.5 547.2H260.7V565.4H209.5zM264.3 547.2H315.4V565.4H264.3zM319.0 547.2H370.2V565.4H319.0zM373.8 547.2H384.1V565.4H373.8zM141.8 570.4H182.2V575.8H141.8zM185.8 570.4H233.7V575.8H185.8zM237.3 570.4H287.2V575.8H237.3zM290.8 570.4H340.2V575.8H290.8zM343.8 570.4H384.1V575.8H343.8z" fill="#c9543e"/>
<path d="M169.700 576V514.200A92.700 92.700 0 0 1 355.100 514.200V576z" fill="#f8f2e1" stroke="#3b2a22" stroke-width=".6"/>
<path d="M192.700 576V513.500A69.450 69.450 0 0 1 331.600 513.500V576z" fill="#2c1a43"/>
<path d="M224 576C216 566 215.500 554 218 547C220 540 220 535 220.200 530.400C221 523 228 512 222.100 499.900C229 503 232 509 233.500 517C235 525 236 535 240.600 542.500C238 538 237 534 237.500 530.400C237.500 527 238 524 238.800 521.200C240 515 243 510 246.200 506.300C250 501 255 497 259.200 493.400C264 489 268 486 270.300 481.300C273 487 271 492 272.100 497.100C273 505 276 513 279.500 519.300C282 515 285 512.500 288.800 511C294 509 300 509.500 305.500 508.600C300 512 297 516 296.200 521.200C296 527 301 530 303.700 534.200C306 539 307 544 306.400 549C306 558 305 568 303.700 576z" fill="#f6a645" stroke="#2c1a43" stroke-width=".8" stroke-linejoin="round"/>
<path d="M246 511C242 518 241.500 524 244.500 529C244 522 245 516.500 246 511zM293 522C291.500 528 292.500 533 296 536.500C294 531 293.500 527 293 522zM237.500 532C237 538 239 543 243.500 546C240.500 541 238.500 537 237.500 532z" fill="#2c1a43"/>
<path d="M243 576C241 568 243 560 250 547C251.500 553 254 556 257.500 558.500C258 548 254 540 253.500 530C253 521 254.500 515 256.400 509C258 519 263 527 268 535C271 541 272.500 547 271 553.500C276 549 280 542 282.300 534C284.500 542 289 549 291.500 557C293.500 564 294 570 293 576z" fill="#fbe091" stroke="#2c1a43" stroke-width=".7" stroke-linejoin="round"/>
<path d="M262 538C263.500 544 266 548 266.500 554C268 548 266 542 262 538zM252 566C252.500 570 254 573 256.500 575.500C254.500 572 253 569 252 566zM284.500 556C284 561 285 566 287.500 570C287 565 285.500 560 284.500 556z" fill="#e59a3c"/>
<rect x="114.300" y="576.300" width="300" height="34.200" rx="1.500" fill="#f8f2e1" stroke="#3b2a22" stroke-width="1"/>
<g fill="none" stroke="#2e2e2e" stroke-width="1.100" stroke-linecap="round" stroke-linejoin="round" vector-effect="non-scaling-stroke"><path transform="translate(121.8 600.6) skewX(-15) scale(1.129 1.0)" vector-effect="non-scaling-stroke" d="M-1 -13C0 -17 3.500 -17.500 7 -16C10.500 -14.500 14 -15 16.500 -19M10 -15.500C10 -10 9 -3 6 -.8C3.500 1 .3 -.2 .7 -2.400C1 -3.800 2.800 -3.700 3.200 -2.500"/><path transform="translate(139.3 600.6) skewX(-15) scale(0.973 1.0)" vector-effect="non-scaling-stroke" d="M0 -2C3.500 -5 7.800 -12 7.200 -16.500C6.800 -19.200 4 -19 3.400 -15.500C2.600 -10 2.500 -4 2.500 0C3 -4 4.500 -9 7.200 -9.300C9.800 -9.400 8.800 -5 8.600 -2.500C8.500 -.8 9.100 0 10.100 -.1C10.900 -.2 11.500 -1 11.900 -2"/><path transform="translate(150.0 600.6) skewX(-15) scale(1.000 1.0)" vector-effect="non-scaling-stroke" d="M0 -2C2.500 -3 5.500 -5.500 5.200 -8C5 -10 1.800 -9.800 1.300 -5.500C.8 -1 3 .3 4.800 -.2C6.200 -.6 7.300 -1.800 8 -3"/><path transform="translate(163.0 600.6) skewX(-15) scale(1.084 1.0)" vector-effect="non-scaling-stroke" d="M12.500 -13.500C13.500 -17.500 9 -19.500 6 -15.500C2 -11 .5 -4.500 3 -1.500C5.500 1.200 10.500 -.5 15 -4.500M6 -15.500C4.500 -12.500 1.600 -13.500 2.300 -16C2.800 -17.500 4.600 -17.300 4.800 -16"/><path transform="translate(179.8 600.6) skewX(-15) scale(1.000 1.0)" vector-effect="non-scaling-stroke" d="M0 -2C1.500 -4 2.500 -7 2.800 -9.800C3.500 -8.500 5 -8.300 5.800 -8.500C5.200 -5 4.600 -.3 6.200 -.1C7.200 0 7.800 -1 8.200 -2"/><path transform="translate(187.3 600.6) skewX(-15) scale(1.067 1.0)" vector-effect="non-scaling-stroke" d="M7.2 -7.500C6 -9.800 2 -10 .8 -5.500C-.3 -1 2.500 .6 4.500 -.5C6.500 -1.600 7.300 -5 7.600 -9.200C7.200 -5 7 -.2 9 -.1C10 -.1 10.500 -1 11 -2"/><path transform="translate(198.5 600.6) skewX(-15) scale(1.250 1.0)" vector-effect="non-scaling-stroke" d="M0 -2C3.500 -5 7.800 -12 7.200 -16.500C6.800 -19.200 4 -19 3.400 -15.500L3.200 3C3.200 5.500 1.600 5.500 1.800 3C2 .5 4 -1.500 8 -3"/><path transform="translate(208.5 600.6) skewX(-15) scale(1.071 1.0)" vector-effect="non-scaling-stroke" d="M0 -2C1.500 -4 3 -9 3.300 -15C3.100 -8 2.600 -.3 4.600 -.1C5.800 0 6.500 -1 7 -2M.3 -10.200L6.800 -10.800"/><path transform="translate(220.4 600.6) skewX(-15) scale(1.000 1.0)" vector-effect="non-scaling-stroke" d="M0 -7C.5 -9.500 2 -9.800 2.200 -8C2.500 -5 1.200 -.2 3.500 -.1C5.800 0 6.500 -5 6.800 -9C6.600 -4 6.600 -.2 8.800 -.1C11 0 12.300 -5 11.800 -9.200C12 -7.500 13 -7 14 -7.300"/><path transform="translate(234.1 600.6) skewX(-15) scale(0.978 1.0)" vector-effect="non-scaling-stroke" d="M0 -2C1 -4 2 -7 2.200 -9.200C2 -5 1.600 -.3 3.200 -.1C4.200 0 4.800 -1 5.200 -2M2.500 -12.800L2.600 -12.400"/><path transform="translate(238.5 600.6) skewX(-15) scale(1.071 1.0)" vector-effect="non-scaling-stroke" d="M0 -2C1.500 -4 3 -9 3.300 -15C3.100 -8 2.600 -.3 4.600 -.1C5.800 0 6.500 -1 7 -2M.3 -10.200L6.800 -10.800"/><path transform="translate(246.0 600.6) skewX(-15) scale(1.136 1.0)" vector-effect="non-scaling-stroke" d="M0 -2C3.500 -5 7.800 -12 7.200 -16.500C6.800 -19.200 4 -19 3.400 -15.500C2.600 -10 2.500 -4 2.500 0C3 -4 4.500 -9 7.200 -9.300C9.800 -9.400 8.800 -5 8.600 -2.500C8.500 -.8 9.100 0 10.100 -.1C10.900 -.2 11.500 -1 11.900 -2"/><path transform="translate(266.9 600.6) skewX(-15) scale(1.073 1.0)" vector-effect="non-scaling-stroke" d="M12.800 -14.600C12.500 -17.500 9.500 -18.500 7.200 -17.900C4.500 -17 3.200 -15 4.100 -13.300C5.500 -10.500 13.500 -8 13.500 -4.300C13.500 -1 11 .9 8.200 .9C5 .9 1.500 0 1.400 -2.400C1.300 -4.500 3 -5.500 3.800 -4.900M13.500 -4.300C14 -2.500 15 -2 16.500 -3"/><path transform="translate(283.0 600.6) skewX(-15) scale(1.114 1.0)" vector-effect="non-scaling-stroke" d="M7.2 -7.500C6 -9.800 2 -10 .8 -5.500C-.3 -1 2.500 .6 4.500 -.5C6.500 -1.600 7.300 -5 7.600 -9.200C7.200 -5 7 -.2 9 -.1C10 -.1 10.500 -1 11 -2"/><path transform="translate(294.7 600.6) skewX(-15) scale(1.027 1.0)" vector-effect="non-scaling-stroke" d="M0 -2C1.500 -4 2.500 -7 2.800 -9.800C3.500 -8.500 5 -8.300 5.800 -8.500C5.200 -5 4.600 -.3 6.200 -.1C7.200 0 7.800 -1 8.200 -2"/><path transform="translate(302.4 600.6) skewX(-15) scale(1.229 1.0)" vector-effect="non-scaling-stroke" d="M7.2 -7.500C6 -9.800 2 -10 .8 -5.500C-.3 -1 2.500 .6 4.500 -.5C6.500 -1.600 7.300 -5 7.600 -9.200C7.200 -5 7 -.2 9 -.1C10 -.1 10.500 -1 11 -2"/><path transform="translate(315.3 600.6) skewX(-15) scale(1.064 1.0)" vector-effect="non-scaling-stroke" d="M0 -2C3.500 -5 7.800 -12 7.200 -16.500C6.800 -19.200 4 -19 3.400 -15.500C2.600 -10 2.500 -4 2.500 0C3 -4 4.500 -9 7.200 -9.300C9.800 -9.400 8.800 -5 8.600 -2.500C8.500 -.8 9.100 0 10.100 -.1C10.900 -.2 11.500 -1 11.900 -2"/><path transform="translate(334.1 600.6) skewX(-15) scale(1.123 1.0)" vector-effect="non-scaling-stroke" d="M-1 -13C0 -17 3.500 -17.500 7 -16C10.500 -14.500 14 -15 16.500 -19M10 -15.500C10 -10 9 -3 6 -.8C3.500 1 .3 -.2 .7 -2.400C1 -3.800 2.800 -3.700 3.200 -2.500M5.500 -8.300C8 -8 11 -8.600 13.500 -9.500"/><path transform="translate(351.5 600.6) skewX(-15) scale(1.105 1.0)" vector-effect="non-scaling-stroke" d="M7.2 -7.500C6 -9.800 2 -10 .8 -5.500C-.3 -1 2.500 .6 4.500 -.5C6.500 -1.600 7.300 -5 7.600 -9.200C7.200 -5 7 -.2 9 -.1C10 -.1 10.500 -1 11 -2"/><path transform="translate(363.1 600.6) skewX(-15) scale(1.000 1.0)" vector-effect="non-scaling-stroke" d="M0 -2C1 -4 2 -7 2.200 -9.200L2 0C2.500 -4 3.800 -9 6 -9.200C8 -9.300 7.400 -5 7.200 0C7.700 -4 9 -9 11.200 -9.200C13.400 -9.300 12.600 -5 12.400 -2.500C12.300 -.8 12.900 0 13.900 -.1C14.700 -.2 15.300 -1 15.700 -2"/><path transform="translate(378.6 600.6) skewX(-15) scale(1.000 1.0)" vector-effect="non-scaling-stroke" d="M0 -2C1 -4 2 -7 2.200 -9.200C2 -5 1.600 -.3 3.200 -.1C4.200 0 4.800 -1 5.200 -2M2.500 -12.800L2.600 -12.400"/><path transform="translate(383.1 600.6) skewX(-15) scale(1.067 1.0)" vector-effect="non-scaling-stroke" d="M0 -2C3.500 -5 7.800 -12 7.200 -16.500C6.800 -19.200 4 -19 3.400 -15.500C2.700 -10 2.200 -.3 4.200 -.1C5.200 0 5.800 -1 6.300 -2"/><path transform="translate(389.5 600.6) skewX(-15) scale(1.273 1.0)" vector-effect="non-scaling-stroke" d="M0 -7C.5 -9.500 2 -9.800 2.200 -8C2.500 -5 1.800 -.3 4 -.2C6.300 -.1 7.500 -5 7.800 -9.200L7.200 2C7 6 3.500 6.500 3.200 4C3 1.500 7 -.5 10.500 -2.500"/></g>
<path d="M107.500 359.800H416.700Q418.600 359.800 418.600 361.700V365Q418.600 369.500 414 370.500Q405.800 372 405.200 380V385.500Q405.200 387.300 403.400 387.300H122.200Q120.400 387.300 120.400 385.500V380Q119.800 372 111.600 370.500Q105.600 369.500 105.600 365V361.700Q105.600 359.800 107.500 359.800z" fill="#f8f2e1" stroke="#3b2a22" stroke-width=".9"/>
<rect x="131.10" y="320.500" width="17.100" height="39.300" fill="#a80f1b"/>
<path d="M138.65 294.500C140.65 300 147.65 306 147.45 314C147.25 318 144.65 320.500 142.65 320.500H136.15C133.15 320.500 131.45 317.500 131.65 314C132.05 306 137.65 302 138.65 294.500z" fill="#f7b24c" stroke="#5a3a10" stroke-width=".6"/>
<path d="M138.85 305.500C140.65 309 143.85 312 143.65 316C143.55 318.500 142.15 320.500 140.65 320.500H137.65C135.85 320.500 135.05 318.500 135.15 316C135.45 312 138.15 309.500 138.85 305.500z" fill="#fcebab" stroke="#5a3a10" stroke-width=".5"/>
<rect x="137.80" y="315.300" width="3.700" height="5.700" fill="#a80f1b"/>
<rect x="377.90" y="320.500" width="17.100" height="39.300" fill="#a80f1b"/>
<path d="M385.45 294.500C387.45 300 394.45 306 394.25 314C394.05 318 391.45 320.500 389.45 320.500H382.95C379.95 320.500 378.25 317.500 378.45 314C378.85 306 384.45 302 385.45 294.500z" fill="#f7b24c" stroke="#5a3a10" stroke-width=".6"/>
<path d="M385.65 305.500C387.45 309 390.65 312 390.45 316C390.35 318.500 388.95 320.500 387.45 320.500H384.45C382.65 320.500 381.85 318.500 381.95 316C382.25 312 384.95 309.500 385.65 305.500z" fill="#fcebab" stroke="#5a3a10" stroke-width=".5"/>
<rect x="384.60" y="315.300" width="3.700" height="5.700" fill="#a80f1b"/>
<path d="M217.400 359.800V348.500Q217.400 345.800 220 345.300C228 343.500 233.500 338.500 235.600 330.500C235.200 327.500 235.200 324.500 235.300 321.600A27.500 27.500 0 0 1 290.300 321.600C290.400 324.500 290.400 327.500 290 330.500C292.100 338.500 297.600 343.500 305.800 345.300Q308.400 345.800 308.400 348.500V359.800z" fill="#4a2f2b"/>
<circle cx="262.800" cy="320.800" r="20.600" fill="#fff"/>
<path d="M254.300 306.800L261.500 321M264 311.800V322.500L260.500 320" stroke="#a80f1b" stroke-width="3.300" stroke-linecap="butt" stroke-linejoin="round" fill="none"/>
<path d="M151.9 336.1Q165.9 337.2 163.5 328.0Q172.3 334.7 177.4 326.3Q179.5 335.2 192.2 329.8Q198.8 338.2 196.5 348.0Q182.2 348.7 183.8 362.4Q175.5 351.0 169.9 357.0Q169.1 348.0 158.3 350.6Q164.6 342.8 151.9 336.1z" fill="#3a7a2a" stroke="#16360f" stroke-width="1.0" stroke-linejoin="miter"/>
<path d="M194.2 328.6Q206.4 323.7 201.8 315.9Q211.2 318.4 213.4 307.7Q217.6 315.8 227.3 305.2Q222.4 318.8 232.7 319.9Q222.7 325.7 228.4 332.7Q219.9 332.3 221.5 346.2L199.5 344.5Q192.9 339.1 194.2 328.6z" fill="#3a7a2a" stroke="#16360f" stroke-width="1.0" stroke-linejoin="miter"/>
<path d="M301.2 305.4Q311.0 315.7 315.6 307.1Q317.4 318.5 326.7 316.5Q322.1 324.1 334.3 329.6Q335.3 339.7 328.4 344.5L307.1 345.4Q308.5 332.5 299.5 334.3Q305.7 325.9 296.1 319.0Q306.1 318.7 301.2 305.4z" fill="#3a7a2a" stroke="#16360f" stroke-width="1.0" stroke-linejoin="miter"/>
<path d="M334.3 330.1Q348.1 335.4 350.5 326.7Q355.8 334.7 364.9 327.5Q362.4 337.1 376.9 336.0Q363.7 342.8 370.1 350.5Q359.0 348.1 358.1 357.3Q352.6 351.3 344.5 363.2Q345.9 348.9 331.5 347.5Q328.3 338.0 334.3 330.1z" fill="#3a7a2a" stroke="#16360f" stroke-width="1.0" stroke-linejoin="miter"/>
<circle cx="197.3" cy="350.7" r="6" fill="#ee3f23"/>
<circle cx="207.1" cy="348.3" r="6.3" fill="#ee3f23"/>
<circle cx="202.2" cy="357.6" r="6" fill="#ee3f23"/>
<circle cx="320.7" cy="348.8" r="5.9" fill="#ee3f23"/>
<circle cx="330.9" cy="350.5" r="6.1" fill="#ee3f23"/>
<circle cx="326.2" cy="358" r="6" fill="#ee3f23"/>
<path d="M136.8 384.3C131.0 379.8 128.0 375.8 129.2 372.3C130.5 369.0 137.5 369.0 138.8 372.3C139.8 375.8 138.8 380.3 138.5 384.3" fill="none" stroke="#a3111b" stroke-width="3.100" stroke-linecap="round"/>
<path d="M201.4 383.8C195.6 379.3 192.6 375.3 193.8 371.8C195.1 368.5 202.1 368.5 203.4 371.8C204.4 375.3 203.4 379.8 203.1 383.8" fill="none" stroke="#1b3a8d" stroke-width="3.100" stroke-linecap="round"/>
<path d="M271.8 390.5C266.0 386.0 263.0 382.0 264.2 378.5C265.5 375.2 272.5 375.2 273.8 378.5C274.8 382.0 273.8 386.5 273.5 390.5" fill="none" stroke="#2f801f" stroke-width="3.100" stroke-linecap="round"/>
<path d="M341.3 388.8C335.5 384.3 332.5 380.3 333.7 376.8C335.0 373.5 342.0 373.5 343.3 376.8C344.3 380.3 343.3 384.8 343.0 388.8" fill="none" stroke="#291945" stroke-width="3.100" stroke-linecap="round"/>
<g transform="translate(150.35 403.85) rotate(14.6)"><g transform="translate(0 0)"><path d="M-16 8L-18 38C-19 45 -24.500 49 -22.500 55C-20.500 59.500 -11 65.500 5 75.500C13 81 23 83.500 29.500 77.500C36 71 36 62.500 31 56.500C27.500 52.500 21 51 17.500 47.500L15.700 8z" fill="#ee3a1d" stroke="#a3111b" stroke-width="3.300" stroke-linejoin="round"/><clipPath id="cpSarah"><path d="M-16 8L-18 38C-19 45 -24.500 49 -22.500 55C-20.500 59.500 -11 65.500 5 75.500C13 81 23 83.500 29.500 77.500C36 71 36 62.500 31 56.500C27.500 52.500 21 51 17.500 47.500L15.700 8z"/></clipPath><g clip-path="url(#cpSarah)"><path d="M-22 8H20V31H-22z" fill="#b3141c"/><path d="M-18 23.500h2.500v-2.500h2v-2.500h2.500v2.500h2v2.500h0v0zM-9 23.500h2.500v-2.500h2v-2.500h2.500v2.500h2v2.500h0v0zM0 23.500h2.500v-2.500h2v-2.500h2.500v2.500h2v2.500h0v0zM9 23.500h2.500v-2.500h2v-2.500h2.500v2.500h2v2.500h0v0z" fill="#ee3a1d"/><path d="M-22 27.500H20" stroke="#ee3a1d" stroke-width="1.600"/><path d="M-22 30.500h8v3h-2v2.500h-4v-2.500h-2zM-14 30.500h8v3h-2v2.500h-4v-2.500h-2zM-6 30.500h8v3h-2v2.500h-4v-2.500h-2zM2 30.500h8v3h-2v2.500h-4v-2.500h-2zM10 30.500h8v3h-2v2.500h-4v-2.500h-2zM18 30.500h8v3h-2v2.500h-4v-2.500h-2z" fill="#b3141c"/><path d="M1 72C5 64 12 56 21 49.500" fill="none" stroke="#a3111b" stroke-width="5.200"/><path d="M3.500 69.500C7 63 12.500 57 19 52" fill="none" stroke="#ee3a1d" stroke-width="1"/><path d="M-17.6 46.8L2.6 52.2M-1.2 51.2l1.7 3.6M-1.2 51.2l3.3 -2.3M-13.8 47.8l-1.7 -3.6M-13.8 47.8l-3.3 2.3M-10.2 39.4L-4.8 59.6M-5.8 55.8l-2.3 3.3M-5.8 55.8l3.6 1.7M-9.2 43.2l2.3 -3.3M-9.2 43.2l-3.6 -1.7M-0.1 42.1L-14.9 56.9M-12.1 54.1l-4.0 -0.3M-12.1 54.1l0.3 4.0M-2.9 44.9l4.0 0.3M-2.9 44.9l-0.3 -4.0" stroke="#fff" stroke-width="3" stroke-linecap="round" fill="none"/><path d="M16.0 65.5L31.0 69.5M28.2 68.8l1.3 2.7M28.2 68.8l2.4 -1.7M18.8 66.2l-1.3 -2.7M18.8 66.2l-2.4 1.7M21.5 60.0L25.5 75.0M24.8 72.2l-1.7 2.4M24.8 72.2l2.7 1.3M22.2 62.8l1.7 -2.4M22.2 62.8l-2.7 -1.3M29.0 62.0L18.0 73.0M20.1 70.9l-3.0 -0.3M20.1 70.9l0.3 3.0M26.9 64.1l3.0 0.3M26.9 64.1l-0.3 -3.0" stroke="#fff" stroke-width="2.5" stroke-linecap="round" fill="none"/><path d="M-7.500 45.500l1.600 4-1.600 4-1.600-4z" fill="#ee3a1d"/></g></g><rect x="-29.200" y="-15.300" width="58.400" height="30.600" rx="8" fill="#fefefe" stroke="#909090" stroke-width="1"/><g fill="none" stroke="#6c6c6c" stroke-width="1.0" stroke-linecap="round" stroke-linejoin="round"><path transform="translate(-23.00 5) skewX(-15) scale(0.789 0.62)" vector-effect="non-scaling-stroke" d="M12.800 -14.600C12.500 -17.500 9.500 -18.500 7.200 -17.900C4.500 -17 3.200 -15 4.100 -13.300C5.500 -10.500 13.500 -8 13.500 -4.300C13.500 -1 11 .9 8.200 .9C5 .9 1.500 0 1.400 -2.400C1.300 -4.500 3 -5.500 3.800 -4.900M13.500 -4.300C14 -2.500 15 -2 16.500 -3"/><path transform="translate(-11.17 5) skewX(-15) scale(0.789 0.62)" vector-effect="non-scaling-stroke" d="M7.2 -7.500C6 -9.800 2 -10 .8 -5.500C-.3 -1 2.500 .6 4.500 -.5C6.500 -1.600 7.300 -5 7.600 -9.200C7.200 -5 7 -.2 9 -.1C10 -.1 10.500 -1 11 -2"/><path transform="translate(-2.88 5) skewX(-15) scale(0.789 0.62)" vector-effect="non-scaling-stroke" d="M0 -2C1.500 -4 2.500 -7 2.800 -9.800C3.500 -8.500 5 -8.300 5.800 -8.500C5.200 -5 4.600 -.3 6.200 -.1C7.200 0 7.800 -1 8.200 -2"/><path transform="translate(3.04 5) skewX(-15) scale(0.789 0.62)" vector-effect="non-scaling-stroke" d="M7.2 -7.500C6 -9.800 2 -10 .8 -5.500C-.3 -1 2.500 .6 4.500 -.5C6.500 -1.600 7.300 -5 7.600 -9.200C7.200 -5 7 -.2 9 -.1C10 -.1 10.500 -1 11 -2"/><path transform="translate(11.32 5) skewX(-15) scale(0.789 0.62)" vector-effect="non-scaling-stroke" d="M0 -2C3.500 -5 7.800 -12 7.200 -16.500C6.800 -19.200 4 -19 3.400 -15.500C2.600 -10 2.500 -4 2.500 0C3 -4 4.500 -9 7.200 -9.300C9.800 -9.400 8.800 -5 8.600 -2.500C8.500 -.8 9.100 0 10.100 -.1C10.900 -.2 11.500 -1 11.900 -2"/></g></g>
<g transform="translate(213.8 404.5) rotate(13.2)"><g transform="translate(0 0)"><path d="M-16 8L-18 38C-19 45 -24.500 49 -22.500 55C-20.500 59.500 -11 65.500 5 75.500C13 81 23 83.500 29.500 77.500C36 71 36 62.500 31 56.500C27.500 52.500 21 51 17.500 47.500L15.700 8z" fill="#a9d8f4" stroke="#1b3a8d" stroke-width="3.300" stroke-linejoin="round"/><clipPath id="cpJames"><path d="M-16 8L-18 38C-19 45 -24.500 49 -22.500 55C-20.500 59.500 -11 65.500 5 75.500C13 81 23 83.500 29.500 77.500C36 71 36 62.500 31 56.500C27.500 52.500 21 51 17.500 47.500L15.700 8z"/></clipPath><g clip-path="url(#cpJames)"><path d="M-22 8H20V31H-22z" fill="#2a4fa6"/><path d="M-18 23.500h2.500v-2.500h2v-2.500h2.500v2.500h2v2.500h0v0zM-9 23.500h2.500v-2.500h2v-2.500h2.500v2.500h2v2.500h0v0zM0 23.500h2.500v-2.500h2v-2.500h2.500v2.500h2v2.500h0v0zM9 23.500h2.500v-2.500h2v-2.500h2.500v2.500h2v2.500h0v0z" fill="#a9d8f4"/><path d="M-22 27.500H20" stroke="#a9d8f4" stroke-width="1.600"/><path d="M-22 30.500h8v3h-2v2.500h-4v-2.500h-2zM-14 30.500h8v3h-2v2.500h-4v-2.500h-2zM-6 30.500h8v3h-2v2.500h-4v-2.500h-2zM2 30.500h8v3h-2v2.500h-4v-2.500h-2zM10 30.500h8v3h-2v2.500h-4v-2.500h-2zM18 30.500h8v3h-2v2.500h-4v-2.500h-2z" fill="#2a4fa6"/><path d="M1 72C5 64 12 56 21 49.500" fill="none" stroke="#1b3a8d" stroke-width="5.200"/><path d="M3.500 69.500C7 63 12.500 57 19 52" fill="none" stroke="#a9d8f4" stroke-width="1"/><path d="M-17.6 46.8L2.6 52.2M-1.2 51.2l1.7 3.6M-1.2 51.2l3.3 -2.3M-13.8 47.8l-1.7 -3.6M-13.8 47.8l-3.3 2.3M-10.2 39.4L-4.8 59.6M-5.8 55.8l-2.3 3.3M-5.8 55.8l3.6 1.7M-9.2 43.2l2.3 -3.3M-9.2 43.2l-3.6 -1.7M-0.1 42.1L-14.9 56.9M-12.1 54.1l-4.0 -0.3M-12.1 54.1l0.3 4.0M-2.9 44.9l4.0 0.3M-2.9 44.9l-0.3 -4.0" stroke="#fff" stroke-width="3" stroke-linecap="round" fill="none"/><path d="M16.0 65.5L31.0 69.5M28.2 68.8l1.3 2.7M28.2 68.8l2.4 -1.7M18.8 66.2l-1.3 -2.7M18.8 66.2l-2.4 1.7M21.5 60.0L25.5 75.0M24.8 72.2l-1.7 2.4M24.8 72.2l2.7 1.3M22.2 62.8l1.7 -2.4M22.2 62.8l-2.7 -1.3M29.0 62.0L18.0 73.0M20.1 70.9l-3.0 -0.3M20.1 70.9l0.3 3.0M26.9 64.1l3.0 0.3M26.9 64.1l-0.3 -3.0" stroke="#fff" stroke-width="2.5" stroke-linecap="round" fill="none"/><path d="M-7.500 45.500l1.600 4-1.600 4-1.600-4z" fill="#a9d8f4"/></g></g><rect x="-29.200" y="-15.300" width="58.400" height="30.600" rx="8" fill="#fefefe" stroke="#909090" stroke-width="1"/><g fill="none" stroke="#6c6c6c" stroke-width="1.0" stroke-linecap="round" stroke-linejoin="round"><path transform="translate(-23.25 5) skewX(-15) scale(0.829 0.65)" vector-effect="non-scaling-stroke" d="M1 -15C3 -18.500 8 -19 13.500 -17M9.500 -17.800C9.500 -10 8.500 -3 6 -.8C3.500 1 .3 -.2 .7 -2.400C1 -3.800 2.800 -3.700 3.200 -2.500M8 -3C9.500 -2 11 -2 12.500 -3"/><path transform="translate(-13.31 5) skewX(-15) scale(0.829 0.65)" vector-effect="non-scaling-stroke" d="M7.2 -7.500C6 -9.800 2 -10 .8 -5.500C-.3 -1 2.500 .6 4.500 -.5C6.500 -1.600 7.300 -5 7.600 -9.200C7.200 -5 7 -.2 9 -.1C10 -.1 10.500 -1 11 -2"/><path transform="translate(-4.61 5) skewX(-15) scale(0.829 0.65)" vector-effect="non-scaling-stroke" d="M0 -2C1 -4 2 -7 2.200 -9.200L2 0C2.500 -4 3.800 -9 6 -9.200C8 -9.300 7.400 -5 7.200 0C7.700 -4 9 -9 11.200 -9.200C13.400 -9.300 12.600 -5 12.400 -2.500C12.300 -.8 12.900 0 13.900 -.1C14.700 -.2 15.300 -1 15.700 -2"/><path transform="translate(8.24 5) skewX(-15) scale(0.829 0.65)" vector-effect="non-scaling-stroke" d="M0 -2C2.500 -3 5.500 -5.500 5.200 -8C5 -10 1.800 -9.800 1.300 -5.500C.8 -1 3 .3 4.800 -.2C6.200 -.6 7.300 -1.800 8 -3"/><path transform="translate(14.45 5) skewX(-15) scale(0.829 0.65)" vector-effect="non-scaling-stroke" d="M0 -2C2 -4 3.500 -7 3.800 -9.600C5.500 -6 6.500 -3 5 -1C3.800 .5 1.500 .2 1 -1.200M5 -1C6 -1 7 -1.500 7.800 -2.500"/></g></g>
<g transform="translate(285.25 411.2) rotate(15.9)"><g transform="translate(2.8 -0.8)"><path d="M-16 8L-18 38C-19 45 -24.500 49 -22.500 55C-20.500 59.500 -11 65.500 5 75.500C13 81 23 83.500 29.500 77.500C36 71 36 62.500 31 56.500C27.500 52.500 21 51 17.500 47.500L15.700 8z" fill="#5db330" stroke="#2f801f" stroke-width="3.300" stroke-linejoin="round"/><clipPath id="cpRick"><path d="M-16 8L-18 38C-19 45 -24.500 49 -22.500 55C-20.500 59.500 -11 65.500 5 75.500C13 81 23 83.500 29.500 77.500C36 71 36 62.500 31 56.500C27.500 52.500 21 51 17.500 47.500L15.700 8z"/></clipPath><g clip-path="url(#cpRick)"><path transform="translate(.5 2.200)" d="M-15.400 27.500L-11.500 20.300L.6 29.300L14.500 15.200M-16.500 35.700L-11.500 27.600L1.200 36.300L15.500 21.500" fill="none" stroke="#fff" stroke-width="3.700" stroke-linejoin="miter"/><path transform="translate(0 2)" d="M-30 52L-19 50.500l3-9 3 9h3.500l3.500-12 3.500 12h3l3.500-11 3.500 11 8-1V55L-30 58z" fill="#2d6e27"/><path transform="translate(0 2)" d="M-19 50.500l2-3-1-.200 2-3-1-.200 1.500-3.500 1.500 3.500-1 .200 2 3-1 .200 2 3zM-9 50.500l2.300-4-1.200-.200 2.200-4-1.100-.200 1.800-4.500 1.800 4.500-1.100.200 2.200 4-1.200.200 2.300 4zM.500 50.500l2.200-3.600-1.100-.200 2-3.600-1-.200 1.600-4 1.600 4-1 .200 2 3.600-1.100.200 2.200 3.600z" fill="#2d6e27"/><g transform="translate(19 64) rotate(-27) scale(1.15 1.450)"><path d="M-15 -1.500v-1.500h1.500v-1.500h1.500v1.500h1.500v1.500h1.500v-1.500h1.500v-1.500h1.500v1.500h1.500v1.500h1.500v-1.500h1.500v-1.500h1.500v1.500h1.500v1.500h1.500v-1.500h1.500v-1.500h1.500v1.500h1.500v1.500h1.500v-1.500h1.500v-1.500h1.500v1.500h1.500v1.500h1.500V1.500v1.500h-1.500v1.500h-1.500v-1.500h-1.500v-1.500h-1.500v1.500h-1.500v1.500h-1.500v-1.500h-1.500v-1.500h-1.500v1.500h-1.500v1.500h-1.500v-1.500h-1.500v-1.500h-1.500v1.500h-1.500v1.500h-1.500v-1.500h-1.500v-1.500h-1.500v1.500h-1.500v1.500h-1.500v-1.500h-1.500v-1.500h-1.500z" fill="#fff"/><path d="M-16 0H16" stroke="#5db330" stroke-width="1.400"/></g></g></g><rect x="-29.200" y="-15.300" width="58.400" height="30.600" rx="8" fill="#fefefe" stroke="#909090" stroke-width="1"/><g fill="none" stroke="#6c6c6c" stroke-width="1.0" stroke-linecap="round" stroke-linejoin="round"><path transform="translate(-23.00 6.5) skewX(-15) scale(1.178 0.8)" vector-effect="non-scaling-stroke" d="M4.500 -16.500C4.500 -10 4 -3 2.500 0M1 -13C2 -18 9 -19.500 11.500 -16C13.500 -13 9 -9 5 -9C8 -8.500 9 -1 12 -.5C13.500 -.3 14.500 -1.500 15.500 -3"/><path transform="translate(-5.33 6.5) skewX(-15) scale(1.178 0.8)" vector-effect="non-scaling-stroke" d="M0 -2C1 -4 2 -7 2.200 -9.200C2 -5 1.600 -.3 3.200 -.1C4.200 0 4.800 -1 5.200 -2M2.500 -12.800L2.600 -12.400"/><path transform="translate(-0.03 6.5) skewX(-15) scale(1.178 0.8)" vector-effect="non-scaling-stroke" d="M6 -7.500C5.500 -9.800 2 -10 1 -5.500C0 -1 2.800 .4 4.600 -.2C6 -.6 7.200 -1.800 8 -3"/><path transform="translate(8.81 6.5) skewX(-15) scale(1.178 0.8)" vector-effect="non-scaling-stroke" d="M0 -2C3.500 -5 7.800 -12 7.200 -16.500C6.800 -19.200 4 -19 3.400 -15.500C2.600 -10 2.500 -4 2.500 0M2.600 -4.500C4 -8 7.500 -10.500 7.800 -8C8 -6 5 -5 3.500 -5C6 -4.500 6 -.3 7.800 -.1C8.800 0 9.500 -1 10 -2"/></g></g>
<g transform="translate(355.3 409) rotate(13.8)"><g transform="translate(0 0)"><path d="M-16 8L-18 38C-19 45 -24.500 49 -22.500 55C-20.500 59.500 -11 65.500 5 75.500C13 81 23 83.500 29.500 77.500C36 71 36 62.500 31 56.500C27.500 52.500 21 51 17.500 47.500L15.700 8z" fill="#4a299b" stroke="#291945" stroke-width="3.300" stroke-linejoin="round"/><clipPath id="cpGeorgie"><path d="M-16 8L-18 38C-19 45 -24.500 49 -22.500 55C-20.500 59.500 -11 65.500 5 75.500C13 81 23 83.500 29.500 77.500C36 71 36 62.500 31 56.500C27.500 52.500 21 51 17.500 47.500L15.700 8z"/></clipPath><g clip-path="url(#cpGeorgie)"><path transform="translate(.5 2.200)" d="M-15.400 27.500L-11.500 20.300L.6 29.300L14.500 15.200M-16.500 35.700L-11.500 27.600L1.200 36.300L15.500 21.500" fill="none" stroke="#fff" stroke-width="3.700" stroke-linejoin="miter"/><path transform="translate(0 2)" d="M-30 52L-19 50.500l3-9 3 9h3.500l3.500-12 3.500 12h3l3.500-11 3.500 11 8-1V55L-30 58z" fill="#291945"/><path transform="translate(0 2)" d="M-19 50.500l2-3-1-.200 2-3-1-.200 1.500-3.500 1.500 3.500-1 .200 2 3-1 .200 2 3zM-9 50.500l2.300-4-1.200-.200 2.200-4-1.100-.200 1.800-4.500 1.800 4.500-1.100.200 2.200 4-1.200.200 2.300 4zM.500 50.500l2.200-3.600-1.100-.200 2-3.600-1-.200 1.600-4 1.600 4-1 .200 2 3.600-1.100.200 2.200 3.600z" fill="#291945"/><g transform="translate(19 64) rotate(-27) scale(1.15 1.450)"><path d="M-15 -1.500v-1.500h1.500v-1.500h1.500v1.500h1.500v1.500h1.500v-1.500h1.500v-1.500h1.500v1.500h1.500v1.500h1.500v-1.500h1.500v-1.500h1.500v1.500h1.500v1.500h1.500v-1.500h1.500v-1.500h1.500v1.500h1.500v1.500h1.500v-1.500h1.500v-1.500h1.500v1.500h1.500v1.500h1.500V1.500v1.500h-1.500v1.500h-1.500v-1.500h-1.500v-1.500h-1.500v1.500h-1.500v1.500h-1.500v-1.500h-1.500v-1.500h-1.500v1.500h-1.500v1.500h-1.500v-1.500h-1.500v-1.500h-1.500v1.500h-1.500v1.500h-1.500v-1.500h-1.500v-1.500h-1.500v1.500h-1.500v1.500h-1.500v-1.500h-1.500v-1.500h-1.500z" fill="#fff"/><path d="M-16 0H16" stroke="#4a299b" stroke-width="1.400"/></g></g></g><rect x="-29.200" y="-15.300" width="58.400" height="30.600" rx="8" fill="#fefefe" stroke="#909090" stroke-width="1"/><g fill="none" stroke="#6c6c6c" stroke-width="1.0" stroke-linecap="round" stroke-linejoin="round"><path transform="translate(-24.50 4.5) skewX(-15) scale(0.760 0.6)" vector-effect="non-scaling-stroke" d="M12.500 -13.500C13.500 -17.500 9 -19.500 6 -15.500C2 -11 .5 -4.500 3 -1.500C5.500 1.200 10.500 -1 12 -6.500L11.500 1C11.300 5 8 5.500 7.700 3C7.500 1 11 -1 15 -3"/><path transform="translate(-13.10 4.5) skewX(-15) scale(0.760 0.6)" vector-effect="non-scaling-stroke" d="M0 -2C2.500 -3 5.500 -5.500 5.200 -8C5 -10 1.800 -9.800 1.300 -5.500C.8 -1 3 .3 4.800 -.2C6.200 -.6 7.300 -1.800 8 -3"/><path transform="translate(-7.39 4.5) skewX(-15) scale(0.760 0.6)" vector-effect="non-scaling-stroke" d="M4.500 -9.300C1.500 -9.500 .3 -5 1 -2.500C1.700 0 4.500 .5 6 -2C7.500 -4.500 7 -9 4.500 -9.300C5 -7 7 -6.500 9 -7.200"/><path transform="translate(-0.93 4.5) skewX(-15) scale(0.760 0.6)" vector-effect="non-scaling-stroke" d="M0 -2C1.500 -4 2.500 -7 2.800 -9.800C3.500 -8.500 5 -8.300 5.800 -8.500C5.200 -5 4.600 -.3 6.200 -.1C7.200 0 7.800 -1 8.200 -2"/><path transform="translate(4.77 4.5) skewX(-15) scale(0.760 0.6)" vector-effect="non-scaling-stroke" d="M7.200 -7.500C6 -9.800 2 -10 .8 -5.500C-.3 -1 2.500 .6 4.500 -.5C6.500 -1.600 7.300 -5 7.600 -9.200L7.200 2C7 6 3.500 6.500 3.200 4C3 1.500 7 -.5 10.500 -2.500"/><path transform="translate(12.38 4.5) skewX(-15) scale(0.760 0.6)" vector-effect="non-scaling-stroke" d="M0 -2C1 -4 2 -7 2.200 -9.200C2 -5 1.600 -.3 3.200 -.1C4.200 0 4.800 -1 5.200 -2M2.500 -12.800L2.600 -12.400"/><path transform="translate(15.80 4.5) skewX(-15) scale(0.760 0.6)" vector-effect="non-scaling-stroke" d="M0 -2C2.500 -3 5.500 -5.500 5.200 -8C5 -10 1.800 -9.800 1.300 -5.500C.8 -1 3 .3 4.800 -.2C6.200 -.6 7.300 -1.800 8 -3"/></g></g>
</svg>
<div class="a" style="left:66px;top:612.500px;width:69px;height:19px;background:rgba(255,255,255,.72)"></div>
<svg class="a" style="left:0;top:0" width="1200" height="647" viewBox="0 0 1200 647">
 <circle cx="75.300" cy="622.500" r="5.800" fill="none" stroke="#c4c4c4" stroke-width="1.100"/>
 <circle cx="126.400" cy="622.500" r="5.800" fill="none" stroke="#c4c4c4" stroke-width="1.100"/>
 <path d="M123 622.500h6.800M126.400 619.100v6.800" stroke="#c4c4c4" stroke-width="1.100"/>
 <text x="100.600" y="626.800" text-anchor="middle" font-family="Liberation Sans" font-size="12" fill="#c2c2c2">100%</text>
 <ellipse cx="47.400" cy="604.200" rx="36.700" ry="28.400" fill="#cc3b22"/>
 <text x="38.500" y="602.500" text-anchor="middle" font-family="Liberation Serif" font-style="italic" font-size="18.500" stroke="#fff" stroke-width=".3" fill="#fff">Craft</text>
 <text x="69" y="598.500" text-anchor="middle" font-family="Liberation Serif" font-weight="bold" font-size="4.500" fill="#fff" letter-spacing=".2">WITH</text>
 <path d="M62 601.500c5-1.500 9 .800 14-.800" stroke="#fff" stroke-width=".8" fill="none"/>
 <text x="47" y="621" text-anchor="middle" font-family="Liberation Serif" font-style="italic" font-size="18.500" stroke="#fff" stroke-width=".3" fill="#fff">Sarah</text>
</svg>
</body>
</html>
